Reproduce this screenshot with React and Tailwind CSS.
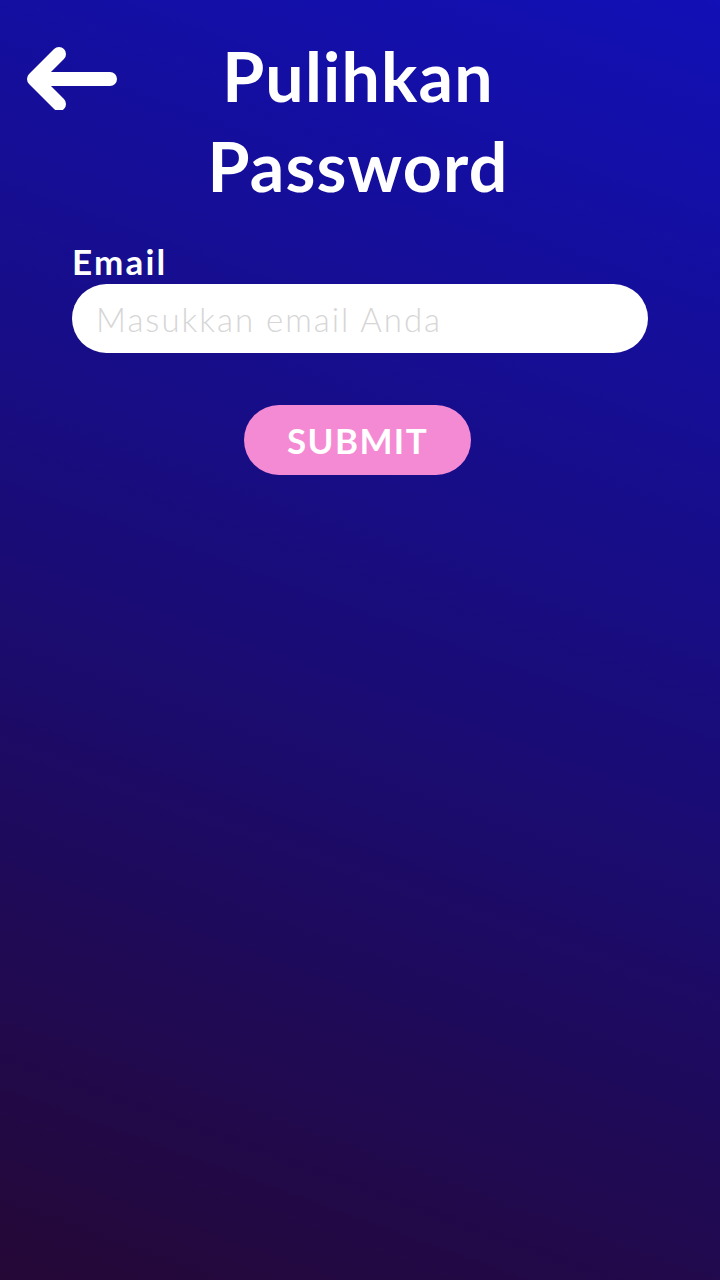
export default function App() {
  return (
    <div
      className="min-h-[1280px] w-[720px] bg-linear-[200deg] from-[#1210b6] via-[#190c78] to-[#250836] text-white"
      style={{ fontFamily: "Lato, 'Noto Sans', sans-serif" }}
    >
      <div className="grid grid-cols-[1fr_auto_1fr] pt-[31px]">
        <div className="pl-[20px] pt-[9px]">
          <svg width="104" height="70" viewBox="0 0 104 70" fill="none">
            <path
              d="M14 39 H90 M39 14 L14 39 L39 64"
              stroke="white"
              strokeWidth="14"
              strokeLinecap="round"
              strokeLinejoin="round"
            />
          </svg>
        </div>
        <h1 className="mr-[4px] text-center text-[68px] font-bold leading-[90px] tracking-[1.2px]">
          Pulihkan
          <br />
          Password
        </h1>
        <div />
      </div>

      <div className="mt-[30px] px-[72px]">
        <label className="block text-[35px] font-bold leading-[40px] tracking-[2.2px]">Email</label>
        <input
          type="email"
          placeholder="Masukkan email Anda"
          className="mt-[3px] h-[69px] w-full rounded-full bg-white pl-[24px] text-[33px] font-light tracking-[2px] text-gray-800 outline-none placeholder:text-[#d6d6d6]"
          style={{ fontFamily: "Lato, 'Noto Sans', sans-serif" }}
        />
      </div>

      <div className="mt-[52px] flex justify-center pr-[5px]">
        <button className="h-[70px] w-[227px] rounded-full bg-[#f48ad3] text-[35px] font-bold tracking-[1.4px] text-white">
          SUBMIT
        </button>
      </div>
    </div>
  );
}
